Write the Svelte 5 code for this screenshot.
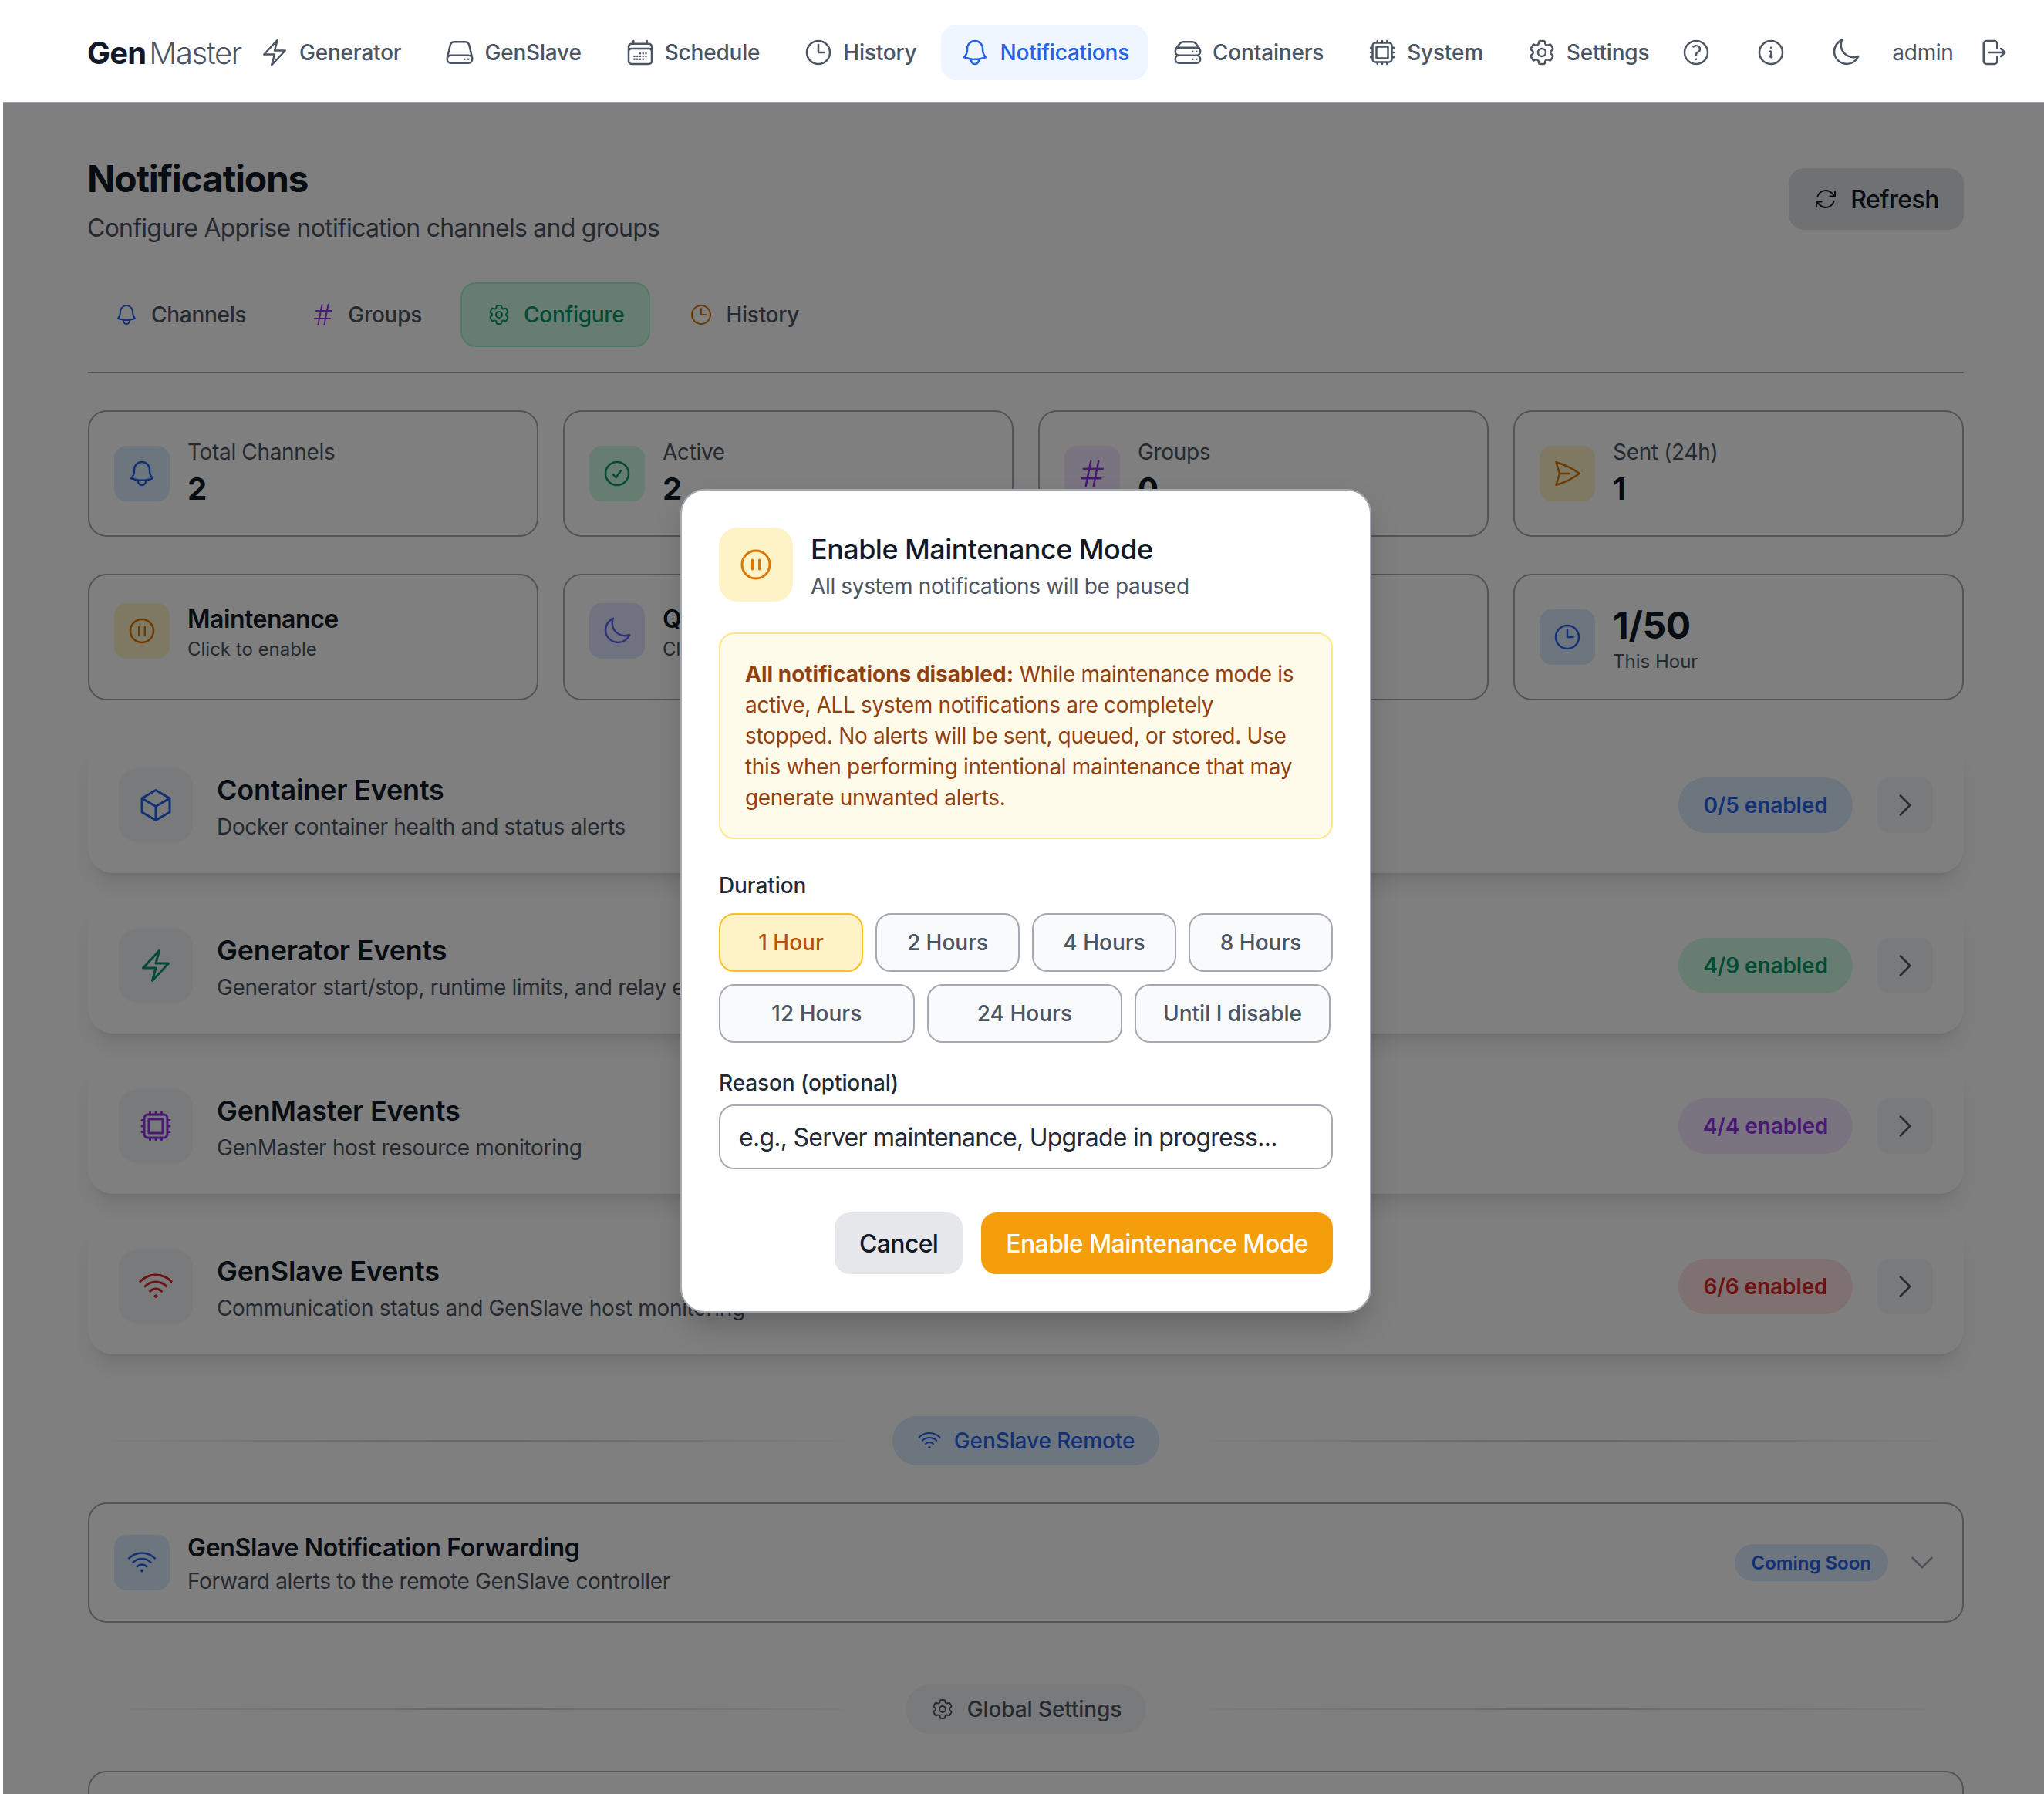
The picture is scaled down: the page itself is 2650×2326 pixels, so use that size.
<script>
  const I = {
    bolt: 'm3.75 13.5 10.5-11.25L12 10.5h8.25L9.75 21.75 12 13.5H3.75Z',
    server: 'M21.75 17.25v-.228a4.5 4.5 0 0 0-.12-1.03l-2.268-9.64a3.375 3.375 0 0 0-3.285-2.602H7.923a3.375 3.375 0 0 0-3.285 2.602l-2.268 9.64a4.5 4.5 0 0 0-.12 1.03v.228m19.5 0a3 3 0 0 1-3 3H5.25a3 3 0 0 1-3-3m19.5 0a3 3 0 0 0-3-3H5.25a3 3 0 0 0-3 3m16.5 0h.008v.008h-.008v-.008Zm-3 0h.008v.008h-.008v-.008Z',
    calendar: 'M6.75 3v2.25M17.25 3v2.25M3 18.75V7.5a2.25 2.25 0 0 1 2.25-2.25h13.5A2.25 2.25 0 0 1 21 7.5v11.25m-18 0A2.25 2.25 0 0 0 5.25 21h13.5A2.25 2.25 0 0 0 21 18.75m-18 0v-7.5A2.25 2.25 0 0 1 5.25 9h13.5A2.25 2.25 0 0 1 21 11.25v7.5m-9-6h.008v.008H12v-.008ZM12 15h.008v.008H12V15Zm0 2.25h.008v.008H12v-.008ZM9.75 15h.008v.008H9.75V15Zm0 2.25h.008v.008H9.75v-.008ZM7.5 15h.008v.008H7.5V15Zm0 2.25h.008v.008H7.5v-.008Zm6.75-4.5h.008v.008h-.008v-.008Zm0 2.25h.008v.008h-.008V15Zm0 2.25h.008v.008h-.008v-.008Zm2.25-4.5h.008v.008H16.5v-.008Zm0 2.25h.008v.008H16.5V15Z',
    clock: 'M12 6v6h4.5m4.5 0a9 9 0 1 1-18 0 9 9 0 0 1 18 0Z',
    bell: 'M14.857 17.082a23.848 23.848 0 0 0 5.454-1.31A8.967 8.967 0 0 1 18 9.75V9A6 6 0 0 0 6 9v.75a8.967 8.967 0 0 1-2.312 6.022c1.733.64 3.56 1.085 5.455 1.31m5.714 0a24.255 24.255 0 0 1-5.714 0m5.714 0a3 3 0 1 1-5.714 0',
    stack: 'M5.25 14.25h13.5m-13.5 0a3 3 0 0 1-3-3m3 3a3 3 0 1 0 0 6h13.5a3 3 0 1 0 0-6m-16.5-3a3 3 0 0 1 3-3h13.5a3 3 0 0 1 3 3m-19.5 0a4.5 4.5 0 0 1 .9-2.7L5.737 5.1a3.375 3.375 0 0 1 2.7-1.35h7.126c1.062 0 2.062.5 2.7 1.35l2.587 3.45a4.5 4.5 0 0 1 .9 2.7m0 0a3 3 0 0 1-3 3m0 3h.008v.008h-.008v-.008Zm0-6h.008v.008h-.008v-.008Zm-3 6h.008v.008h-.008v-.008Zm0-6h.008v.008h-.008v-.008Z',
    chip: 'M8.25 3v1.5M4.5 8.25H3m18 0h-1.5M4.5 12H3m18 0h-1.5m-15 3.75H3m18 0h-1.5M8.25 19.5V21M12 3v1.5m0 15V21m3.75-18v1.5m0 15V21m-9-1.5h10.5a2.25 2.25 0 0 0 2.25-2.25V6.75a2.25 2.25 0 0 0-2.25-2.25H6.75A2.25 2.25 0 0 0 4.5 6.75v10.5a2.25 2.25 0 0 0 2.25 2.25Zm.75-12h9v9h-9v-9Z',
    cog: 'M9.594 3.94c.09-.542.56-.94 1.11-.94h2.593c.55 0 1.02.398 1.11.94l.213 1.281c.063.374.313.686.645.87.074.04.147.083.22.127.325.196.72.257 1.075.124l1.217-.456a1.125 1.125 0 0 1 1.37.49l1.296 2.247a1.125 1.125 0 0 1-.26 1.431l-1.003.827c-.293.241-.438.613-.43.992a7.723 7.723 0 0 1 0 .255c-.008.378.137.75.43.991l1.004.827c.424.35.534.955.26 1.43l-1.298 2.247a1.125 1.125 0 0 1-1.369.491l-1.217-.456c-.355-.133-.75-.072-1.076.124a6.47 6.47 0 0 1-.22.128c-.331.183-.581.495-.644.869l-.213 1.281c-.09.543-.56.94-1.11.94h-2.594c-.55 0-1.019-.398-1.11-.94l-.213-1.281c-.062-.374-.312-.686-.644-.87a6.52 6.52 0 0 1-.22-.127c-.325-.196-.72-.257-1.076-.124l-1.217.456a1.125 1.125 0 0 1-1.369-.49l-1.297-2.247a1.125 1.125 0 0 1 .26-1.431l1.004-.827c.292-.24.437-.613.43-.991a6.932 6.932 0 0 1 0-.255c.007-.38-.138-.751-.43-.992l-1.004-.827a1.125 1.125 0 0 1-.26-1.43l1.297-2.247a1.125 1.125 0 0 1 1.37-.491l1.216.456c.356.133.751.072 1.076-.124.072-.044.146-.086.22-.128.332-.183.582-.495.644-.869l.214-1.28ZM15 12a3 3 0 1 1-6 0 3 3 0 0 1 6 0Z',
    help: 'M9.879 7.519c1.171-1.025 3.071-1.025 4.242 0 1.172 1.025 1.172 2.687 0 3.712-.203.179-.43.326-.67.442-.745.361-1.45.999-1.45 1.827v.75M21 12a9 9 0 1 1-18 0 9 9 0 0 1 18 0Zm-9 5.25h.008v.008H12v-.008Z',
    info: 'm11.25 11.25.041-.02a.75.75 0 0 1 1.063.852l-.708 2.836a.75.75 0 0 0 1.063.853l.041-.021M21 12a9 9 0 1 1-18 0 9 9 0 0 1 18 0Zm-9-3.75h.008v.008H12V8.25Z',
    moon: 'M21.752 15.002A9.72 9.72 0 0 1 18 15.75c-5.385 0-9.75-4.365-9.75-9.75 0-1.33.266-2.597.748-3.752A9.753 9.753 0 0 0 3 11.25C3 16.635 7.365 21 12.75 21a9.753 9.753 0 0 0 9.002-5.998Z',
    logout: 'M15.75 9V5.25A2.25 2.25 0 0 0 13.5 3h-6a2.25 2.25 0 0 0-2.25 2.25v13.5A2.25 2.25 0 0 0 7.5 21h6a2.25 2.25 0 0 0 2.25-2.25V15m3 0 3-3m0 0-3-3m3 3H9',
    refresh: 'M16.023 9.348h4.992v-.001M2.985 19.644v-4.992m0 0h4.992m-4.993 0 3.181 3.183a8.25 8.25 0 0 0 13.803-3.7M4.031 9.865a8.25 8.25 0 0 1 13.803-3.7l3.181 3.182m0-4.991v4.99',
    hash: 'M5.25 8.25h15m-16.5 7.5h15m-1.8-13.5-3.9 19.5m-2.1-19.5-3.9 19.5',
    check: 'M9 12.75 11.25 15 15 9.75M21 12a9 9 0 1 1-18 0 9 9 0 0 1 18 0Z',
    send: 'M6 12 3.269 3.125A59.769 59.769 0 0 1 21.485 12 59.768 59.768 0 0 1 3.27 20.875L5.999 12Zm0 0h7.5',
    pause: 'M14.25 9v6m-4.5 0V9M21 12a9 9 0 1 1-18 0 9 9 0 0 1 18 0Z',
    cube: 'm21 7.5-9-5.25L3 7.5m18 0-9 5.25m9-5.25v9l-9 5.25M3 7.5l9 5.25M3 7.5v9l9 5.25m0-9v9',
    wifi: 'M8.288 15.038a5.25 5.25 0 0 1 7.424 0M5.106 11.856c3.807-3.808 9.98-3.808 13.788 0M1.924 8.674c5.565-5.565 14.587-5.565 20.152 0M12.53 18.22l-.53.53-.53-.53a.75.75 0 0 1 1.06 0Z',
    right: 'm8.25 4.5 7.5 7.5-7.5 7.5',
    down: 'm19.5 8.25-7.5 7.5-7.5-7.5'
  };

  const nav = [
    ['Generator', I.bolt], ['GenSlave', I.server], ['Schedule', I.calendar], ['History', I.clock],
    ['Notifications', I.bell, true], ['Containers', I.stack], ['System', I.chip], ['Settings', I.cog]
  ];
  const tabs = [
    ['Channels', I.bell, 'blue'], ['Groups', I.hash, 'purple'],
    ['Configure', I.cog, 'green', true], ['History', I.clock, 'amber']
  ];
  const stats = [
    { k: 'label', top: 'Total Channels', val: '2', icon: I.bell, tone: 'blue' },
    { k: 'label', top: 'Active', val: '2', icon: I.check, tone: 'green' },
    { k: 'label', top: 'Groups', val: '0', icon: I.hash, tone: 'purple' },
    { k: 'label', top: 'Sent (24h)', val: '1', icon: I.send, tone: 'amber' },
    { k: 'toggle', top: 'Maintenance', val: 'Click to enable', icon: I.pause, tone: 'amber' },
    { k: 'toggle', top: 'Quiet Hours', val: 'Click to enable', icon: I.moon, tone: 'indigo' },
    { k: 'empty' },
    { k: 'rate', top: '1/50', val: 'This Hour', icon: I.clock, tone: 'blue' }
  ];
  const cats = [
    { t: 'Container Events', s: 'Docker container health and status alerts', i: I.cube, tone: 'blue', b: '0/5 enabled' },
    { t: 'Generator Events', s: 'Generator start/stop, runtime limits, and relay events', i: I.bolt, tone: 'green', b: '4/9 enabled' },
    { t: 'GenMaster Events', s: 'GenMaster host resource monitoring', i: I.chip, tone: 'purple', b: '4/4 enabled' },
    { t: 'GenSlave Events', s: 'Communication status and GenSlave host monitoring', i: I.wifi, tone: 'red', b: '6/6 enabled' }
  ];
  const row1 = ['1 Hour', '2 Hours', '4 Hours', '8 Hours'];
  const row2 = ['12 Hours', '24 Hours', 'Until I disable'];
</script>

{#snippet ico(d, cls)}
  <svg class={cls} viewBox="0 0 24 24" fill="none" stroke="currentColor" stroke-width="1.5" stroke-linecap="round" stroke-linejoin="round" aria-hidden="true"><path {d} /></svg>
{/snippet}

<div class="page">
  <header class="top">
    <div class="logo"><b>Gen</b><span>Master</span></div>
    <nav class="nav">
      {#each nav as [label, d, active]}
        <a class="nav-item" class:active href="#top">{@render ico(d, 'i40')}<span>{label}</span></a>
      {/each}
    </nav>
    <div class="tools">
      <button class="tool">{@render ico(I.help, 'i40')}</button>
      <button class="tool">{@render ico(I.info, 'i40')}</button>
      <button class="tool">{@render ico(I.moon, 'i40')}</button>
      <span class="admin">admin</span>
      <button class="tool">{@render ico(I.logout, 'i40')}</button>
    </div>
  </header>

  <main class="main">
    <section class="head">
      <div class="head-text">
        <h1>Notifications</h1>
        <p>Configure Apprise notification channels and groups</p>
      </div>
      <button class="refresh">{@render ico(I.refresh, 'i32')}<span>Refresh</span></button>
    </section>

    <div class="tabs">
      {#each tabs as [label, d, tone, on]}
        <button class="tab" class:on><span class="tc-{tone} ib">{@render ico(d, 'i32')}</span><span>{label}</span></button>
      {/each}
    </div>

    <section class="stats">
      {#each stats as s}
        <div class="stat">
          {#if s.k !== 'empty'}
            <div class="tile72 bg-{s.tone} tc-{s.tone}" class:stat-mid={s.k === 'toggle'}>{@render ico(s.icon, 'i40')}</div>
            <div class="stat-body">
              {#if s.k === 'label'}
                <div class="st-label">{s.top}</div><div class="st-val">{s.val}</div>
              {:else if s.k === 'toggle'}
                <div class="st-name">{s.top}</div><div class="st-small">{s.val}</div>
              {:else}
                <div class="st-big">{s.top}</div><div class="st-small">{s.val}</div>
              {/if}
            </div>
          {/if}
        </div>
      {/each}
    </section>

    <section class="cats">
      {#each cats as c}
        <article class="cat">
          <div class="tile96 tc-{c.tone}">{@render ico(c.i, 'i48')}</div>
          <div class="cat-body">
            <h3>{c.t}</h3>
            <p>{c.s}</p>
          </div>
          <span class="badge bg-{c.tone} tc-{c.tone}">{c.b}</span>
          <span class="chev">{@render ico(I.right, 'i40')}</span>
        </article>
      {/each}
    </section>

    <div class="sep">
      <span class="sep-line"></span>
      <span class="sep-pill bg-blue tc-blue">{@render ico(I.wifi, 'i32')}<span>GenSlave Remote</span></span>
      <span class="sep-line"></span>
    </div>

    <article class="fwd">
      <div class="tile72 bg-blue tc-blue">{@render ico(I.wifi, 'i40')}</div>
      <div class="fwd-body">
        <h3>GenSlave Notification Forwarding</h3>
        <p>Forward alerts to the remote GenSlave controller</p>
      </div>
      <span class="soon bg-blue tc-blue">Coming Soon</span>
      <span class="fwd-chev">{@render ico(I.down, 'i40')}</span>
    </article>

    <div class="sep">
      <span class="sep-line"></span>
      <span class="sep-pill gray">{@render ico(I.cog, 'i32')}<span>Global Settings</span></span>
      <span class="sep-line"></span>
    </div>

    <article class="fwd tall"></article>
  </main>

  <div class="overlay">
    <div class="modal">
      <div class="m-head">
        <div class="m-tile">{@render ico(I.pause, 'i48')}</div>
        <div>
          <h2>Enable Maintenance Mode</h2>
          <p>All system notifications will be paused</p>
        </div>
      </div>
      <div class="warn"><strong>All notifications disabled:</strong> While maintenance mode is active, ALL system notifications are completely stopped. No alerts will be sent, queued, or stored. Use this when performing intentional maintenance that may generate unwanted alerts.</div>
      <div class="lbl dur">Duration</div>
      <div class="opts four">
        {#each row1 as o, i}
          <button class="opt" class:sel={i === 0}>{o}</button>
        {/each}
      </div>
      <div class="opts three">
        {#each row2 as o}
          <button class="opt">{o}</button>
        {/each}
      </div>
      <div class="lbl rsn">Reason (optional)</div>
      <input class="reason" type="text" placeholder="e.g., Server maintenance, Upgrade in progress..." />
      <div class="actions">
        <button class="cancel">Cancel</button>
        <button class="go">Enable Maintenance Mode</button>
      </div>
    </div>
  </div>
</div>

<style>
  :global(body) { margin: 0; background: #fff; }
  :global(*) { box-sizing: border-box; }
  .page { position: relative; width: 2650px; height: 2326px; overflow: hidden; background: #fff; font-family: Inter, "Liberation Sans", sans-serif; color: #111827; }
  button { font-family: inherit; }
  h1, h2, h3, p { margin: 0; }

  .i32 { width: 32px; height: 32px; display: block; flex: none; }
  .i40 { width: 40px; height: 40px; display: block; flex: none; }
  .i48 { width: 48px; height: 48px; display: block; flex: none; }
  .ib { display: block; flex: none; }

  .tc-blue { color: #2563eb; }
  .tc-green { color: #059669; }
  .tc-purple { color: #9333ea; }
  .tc-amber { color: #d97706; }
  .tc-indigo { color: #6366f1; }
  .tc-red { color: #dc2626; }
  .bg-blue { background: #dbeafe; }
  .bg-green { background: #d1fae5; }
  .bg-purple { background: #f3e8ff; }
  .bg-amber { background: #fef3c7; }
  .bg-indigo { background: #e0e7ff; }
  .bg-red { background: #fee2e2; }

  .top { position: relative; z-index: 5; height: 134px; padding: 32px 0 0 113px; display: flex; align-items: flex-start; background: #fff; }
  .top::after { content: ""; position: absolute; left: 4px; right: 0; bottom: 0; height: 2px; background: #9ca3af; }
  .logo { width: 199px; height: 72px; display: flex; align-items: center; font-size: 40px; white-space: nowrap; flex: none; }
  .logo b { font-weight: 700; color: #111827; letter-spacing: -0.8px; margin-right: 4px; }
  .logo span { font-weight: 300; color: #4b5563; letter-spacing: -1.4px; }
  .nav { display: flex; gap: 8px; }
  .nav-item { height: 72px; padding: 0 24px; display: flex; align-items: center; gap: 12px; border-radius: 20px; font-size: 28px; font-weight: 500; letter-spacing: -0.2px; color: #4b5563; text-decoration: none; white-space: nowrap; }
  .nav-item.active { background: #eff6ff; color: #2563eb; }
  .tools { display: flex; align-items: center; height: 72px; margin-left: 1px; }
  .tool { width: 72px; height: 72px; padding: 16px; border: 0; background: none; color: #4b5563; margin-right: 25px; }
  .admin { font-size: 28px; letter-spacing: -0.3px; color: #4b5563; margin: 0 14px 0 -1px; }

  .main { width: 2432px; margin-left: 114px; padding-top: 64px; }
  .head { display: flex; justify-content: space-between; align-items: flex-start; margin-bottom: 46px; }
  .head-text { margin-left: -1px; }
  .head h1 { padding-top: 2px; font-size: 48px; line-height: 64px; font-weight: 700; letter-spacing: -1.25px; }
  .head p { margin-top: 8px; font-size: 32px; line-height: 48px; letter-spacing: -0.74px; color: #4b5563; }
  .refresh { height: 80px; margin-top: 20px; padding: 0 32px; display: flex; align-items: center; gap: 16px; border: 0; border-radius: 20px; background: #e0e2e6; color: #111827; font-size: 32px; font-weight: 500; letter-spacing: -0.5px; }

  .tabs { display: flex; gap: 16px; padding-bottom: 32px; border-bottom: 2px solid #a5a9b2; margin-bottom: 48px; }
  .tab { height: 84px; padding: 0 32px; display: flex; align-items: center; gap: 16px; border: 2px solid transparent; border-radius: 20px; background: none; font-size: 28px; font-weight: 500; letter-spacing: -0.28px; color: #4b5563; }
  .tab.on { background: #d1fae5; border-color: #a7f3d0; color: #059669; }

  .stats { display: grid; grid-template-columns: repeat(4, 1fr); gap: 48px 32px; margin-bottom: 48px; }
  .stat { height: 164px; padding: 32px; border: 2px solid #a5a9b2; border-radius: 24px; display: flex; align-items: center; gap: 23px; }
  .tile72 { width: 72px; height: 72px; flex: none; display: flex; align-items: center; justify-content: center; border-radius: 16px; }
  .stat-body { align-self: flex-start; }
  .stat-mid { align-self: flex-start; margin-top: 4px; }
  .st-label { font-size: 28px; line-height: 40px; letter-spacing: -0.33px; color: #4b5563; }
  .st-val { font-size: 40px; line-height: 56px; font-weight: 700; color: #111827; }
  .st-name { padding-top: 2px; font-size: 32px; line-height: 46px; font-weight: 600; letter-spacing: -0.46px; color: #111827; white-space: nowrap; }
  .st-small { font-size: 24px; line-height: 32px; color: #4b5563; }
  .st-big { padding-top: 2px; font-size: 48px; line-height: 62px; font-weight: 700; letter-spacing: -0.4px; color: #111827; }

  .cats { display: flex; flex-direction: column; gap: 32px; }
  .cat { height: 176px; padding: 40px; display: flex; align-items: center; background: #fff; border-radius: 32px; box-shadow: 0 20px 30px -6px rgba(0,0,0,.1), 0 8px 12px -8px rgba(0,0,0,.1); }
  .tile96 { width: 96px; height: 96px; flex: none; display: flex; align-items: center; justify-content: center; border-radius: 24px; background: #f3f4f6; }
  .cat-body { flex: 1; margin-left: 31px; }
  .cat-body h3 { font-size: 36px; line-height: 56px; font-weight: 600; letter-spacing: -0.2px; }
  .cat-body p { font-size: 28px; line-height: 40px; letter-spacing: -0.33px; color: #4b5563; }
  .badge { height: 72px; width: 226px; display: flex; align-items: center; justify-content: center; border-radius: 36px; font-size: 28px; font-weight: 600; letter-spacing: -0.1px; }
  .chev { margin-left: 32px; width: 72px; height: 72px; display: flex; align-items: center; justify-content: center; border-radius: 16px; background: #f3f4f6; color: #4b5563; }

  .sep { display: flex; align-items: center; gap: 32px; margin: 80px 0 48px; }
  .sep-line { flex: 1; height: 2px; background: linear-gradient(90deg, transparent, #c9ccd2 50%, transparent); }
  .sep-pill { height: 64px; padding: 0 32px; display: flex; align-items: center; gap: 16px; border-radius: 32px; font-size: 28px; font-weight: 500; letter-spacing: -0.1px; white-space: nowrap; }
  .sep-pill.gray { background: #f3f4f6; color: #4b5563; }

  .fwd { height: 156px; padding: 32px; border: 2px solid #a5a9b2; border-radius: 24px; display: flex; align-items: center; }
  .fwd.tall { height: 400px; }
  .fwd-body { flex: 1; margin-left: 23px; }
  .fwd-body h3 { padding-top: 2px; font-size: 32px; line-height: 46px; font-weight: 600; letter-spacing: -0.32px; }
  .fwd-body p { font-size: 28px; line-height: 40px; letter-spacing: -0.32px; color: #4b5563; }
  .soon { height: 48px; padding: 0 22px; display: flex; align-items: center; border-radius: 24px; font-size: 24px; font-weight: 600; }
  .fwd-chev { margin-left: 24px; color: #9ca3af; }

  .overlay { position: absolute; left: 4px; right: 0; top: 134px; bottom: 0; z-index: 4; background: rgba(0,0,0,.5); }
  .modal { position: absolute; left: 878px; top: 500px; width: 896px; height: 1068px; padding: 48px; background: #fff; border: 2px solid #a5a9b2; border-radius: 32px; box-shadow: 0 20px 40px -8px rgba(0,0,0,.25); }
  .m-head { display: flex; gap: 23px; margin-bottom: 40px; }
  .m-head h2 { font-size: 36px; line-height: 56px; font-weight: 500; letter-spacing: -0.55px; color: #111827; }
  .m-head p { font-size: 28px; line-height: 40px; letter-spacing: -0.35px; color: #4b5563; }
  .m-tile { width: 96px; height: 96px; flex: none; display: flex; align-items: center; justify-content: center; border-radius: 24px; background: #fef3c7; color: #d97706; }
  .warn { padding: 32px; background: #fffbeb; border: 2px solid #fde68a; border-radius: 20px; font-size: 28px; line-height: 40px; letter-spacing: -0.33px; color: #92400e; }
  .warn strong { font-weight: 700; letter-spacing: 0; }
  .lbl { font-size: 28px; line-height: 40px; font-weight: 500; letter-spacing: -0.1px; color: #1f2937; }
  .dur { margin: 40px 0 16px; }
  .opts { display: grid; gap: 16px; }
  .four { grid-template-columns: repeat(4, 1fr); margin-bottom: 16px; }
  .three { grid-template-columns: repeat(3, 253.6px); }
  .opt { height: 76px; padding: 0; border: 2px solid #a5a9b2; border-radius: 20px; background: #f9fafb; font-size: 28px; font-weight: 500; color: #4b5563; }
  .opt.sel { background: #fef3c7; border-color: #fbbf24; color: #b45309; }
  .rsn { margin: 32px 0 8px; }
  .reason { display: block; width: 100%; height: 84px; padding: 0 24px; border: 2px solid #a5a9b2; border-radius: 20px; background: #fff; font-family: inherit; font-size: 32px; letter-spacing: -0.75px; color: #1f2937; outline: none; }
  .reason::placeholder { color: #1f2937; opacity: 1; }
  .actions { display: flex; justify-content: flex-end; gap: 24px; margin-top: 56px; }
  .cancel, .go { height: 80px; padding: 0 32px; border: 0; border-radius: 20px; font-size: 32px; font-weight: 500; white-space: nowrap; }
  .cancel { background: #e5e7eb; color: #111827; letter-spacing: -0.66px; }
  .go { background: #f59e0b; color: #fff; letter-spacing: -0.6px; }
</style>
